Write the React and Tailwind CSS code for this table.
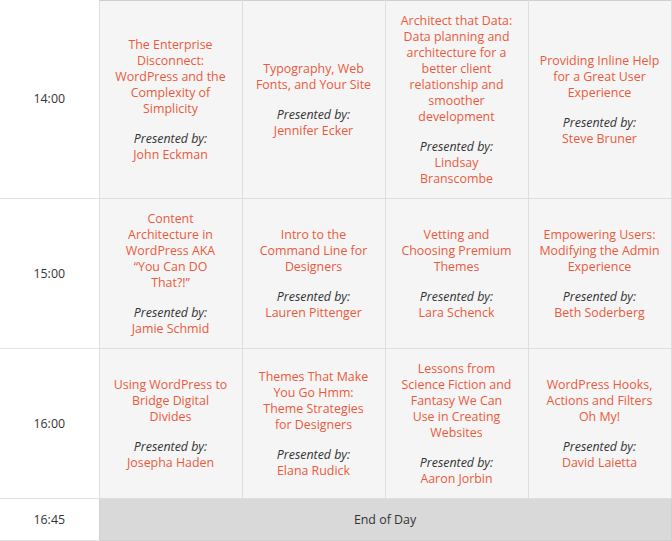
import React from 'react';

// titles are split where the original wraps them
const rows = [
  {
    time: '14:00',
    sessions: [
      { title: ['The Enterprise', 'Disconnect:', 'WordPress and the', 'Complexity of', 'Simplicity'], by: ['John Eckman'] },
      { title: ['Typography, Web', 'Fonts, and Your Site'], by: ['Jennifer Ecker'] },
      { title: ['Architect that Data:', 'Data planning and', 'architecture for a', 'better client', 'relationship and', 'smoother', 'development'], by: ['Lindsay', 'Branscombe'] },
      { title: ['Providing Inline Help', 'for a Great User', 'Experience'], by: ['Steve Bruner'] },
    ],
  },
  {
    time: '15:00',
    sessions: [
      { title: ['Content', 'Architecture in', 'WordPress AKA', '\u201cYou Can DO', 'That?!\u201d'], by: ['Jamie Schmid'] },
      { title: ['Intro to the', 'Command Line for', 'Designers'], by: ['Lauren Pittenger'] },
      { title: ['Vetting and', 'Choosing Premium', 'Themes'], by: ['Lara Schenck'] },
      { title: ['Empowering Users:', 'Modifying the Admin', 'Experience'], by: ['Beth Soderberg'] },
    ],
  },
  {
    time: '16:00',
    sessions: [
      { title: ['Using WordPress to', 'Bridge Digital', 'Divides'], by: ['Josepha Haden'] },
      { title: ['Themes That Make', 'You Go Hmm:', 'Theme Strategies', 'for Designers'], by: ['Elana Rudick'] },
      { title: ['Lessons from', 'Science Fiction and', 'Fantasy We Can', 'Use in Creating', 'Websites'], by: ['Aaron Jorbin'] },
      { title: ['WordPress Hooks,', 'Actions and Filters', 'Oh My!'], by: ['David Laietta'] },
    ],
  },
];

const App = () => {
  return (
    <div className="bg-white w-[672px] h-[541px] overflow-hidden font-['Open_Sans',sans-serif] text-[12.4px] leading-4">
      <table className="w-[671px] table-fixed border-collapse">
        <colgroup>
          <col className="w-[99px]" />
          <col className="w-[143px]" />
          <col className="w-[143px]" />
          <col className="w-[143px]" />
          <col className="w-[143px]" />
        </colgroup>
        <tbody>
          {rows.map((row, i) => (
            <tr key={i}>
              <td className={`text-center align-middle text-[#333] border-b border-[#e2e2e2] p-0 ${i === 0 ? 'h-[198px]' : 'h-[150px]'}`}>
                {row.time}
              </td>
              {row.sessions.map((s, j) => (
                <td
                  key={j}
                  className={`bg-[#f5f5f5] border border-[#dedede] text-center align-middle px-1 py-[10px] whitespace-nowrap ${i === 0 ? 'border-t-[#cfcfcf]' : ''}`}
                >
                  <div className="text-[#eb5a3c]">
                    {s.title.map((line, k) => (
                      <div key={k}>{line}</div>
                    ))}
                  </div>
                  <div className="mt-[14px] italic text-[#333]">Presented by:</div>
                  <div className="text-[#eb5a3c]">
                    {s.by.map((line, k) => (
                      <div key={k}>{line}</div>
                    ))}
                  </div>
                </td>
              ))}
            </tr>
          ))}
          <tr>
            <td className="h-[42px] p-0 text-center align-middle text-[#333] border-b border-[#e2e2e2]">16:45</td>
            <td colSpan={4} className="bg-[#d9d9d9] border border-[#d0d0d0] text-center align-middle text-[#333]">
              End of Day
            </td>
          </tr>
        </tbody>
      </table>
    </div>
  );
};

export default App;
